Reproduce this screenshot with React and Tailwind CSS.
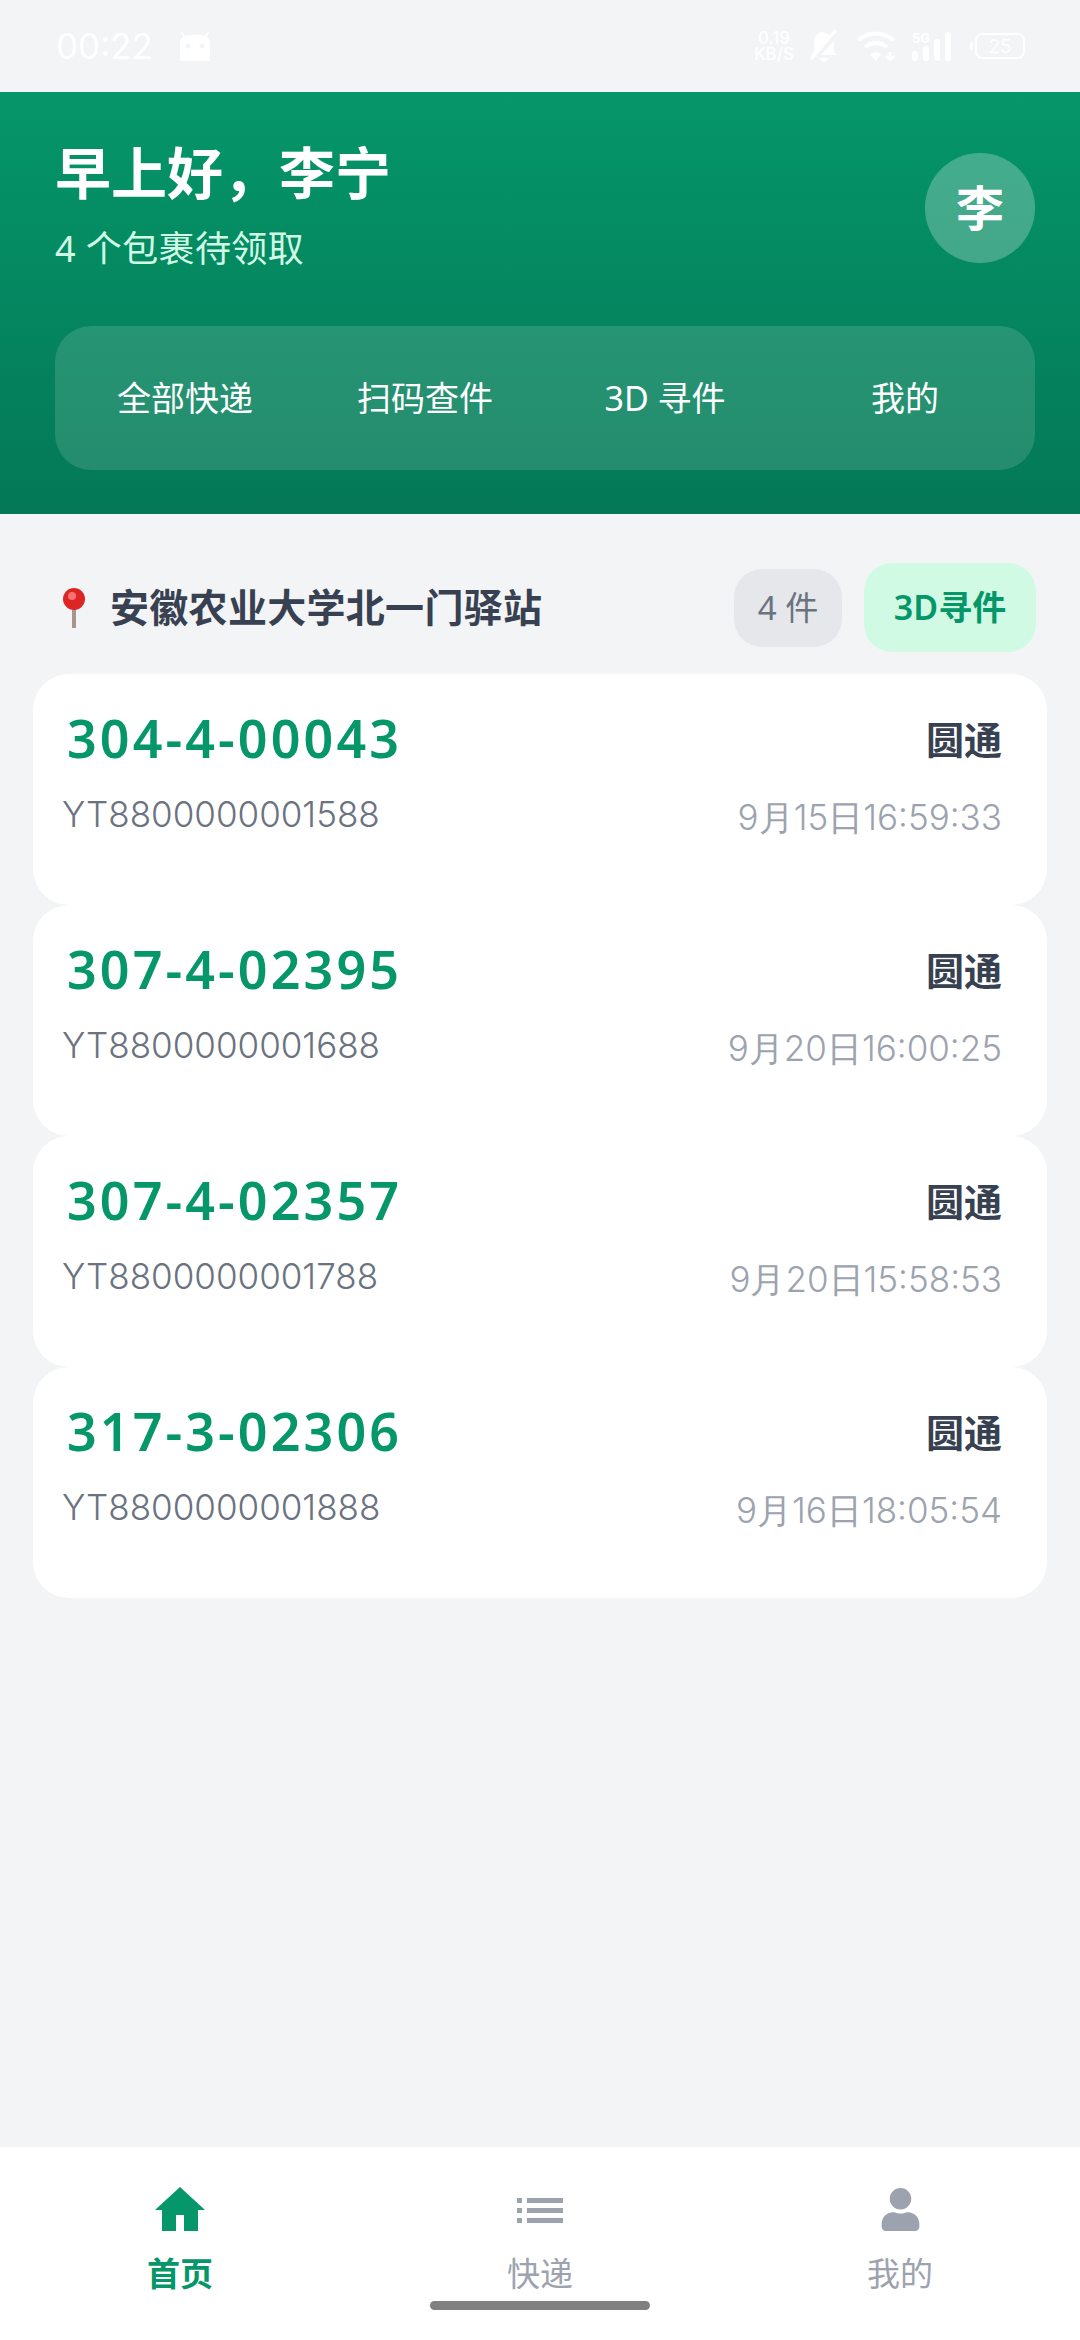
import { FaUser } from 'react-icons/fa'

const SANS = 'font-["Noto_Sans","Noto_Sans_CJK_SC",sans-serif]'

const parcels = [
    { code: '304-4-00043', no: 'YT8800000001588', time: '9月15日16:59:33' },
    { code: '307-4-02395', no: 'YT8800000001688', time: '9月20日16:00:25' },
    { code: '307-4-02357', no: 'YT8800000001788', time: '9月20日15:58:53' },
    { code: '317-3-02306', no: 'YT8800000001888', time: '9月16日18:05:54' },
]

function HomeIcon() {
    return (
        <svg width="50" height="44" viewBox="0 0 50 44" fill="currentColor">
            <path d="M25 0 50 23H43V44H29V28H21V44H7V23H0z" />
        </svg>
    )
}

function ListIcon() {
    return (
        <svg className="mb-[8px]" width="46" height="25" viewBox="0 0 46 25" fill="currentColor">
            <path d="M0 0h5v5H0zM10 0h36v5H10zM0 10h5v5H0zM10 10h36v5H10zM0 20h5v5H0zM10 20h36v5H10z" />
        </svg>
    )
}

function UserIcon() {
    return <FaUser size={43} />
}

function StatusBar() {
    return (
        <div className="h-[92px] flex items-center justify-between pl-[56px] pr-[55px] text-white">
            <div className="flex items-center gap-[26px]">
                <span className="text-[35px] leading-none font-['Inter',sans-serif]">00:22</span>
                <svg width="32" height="30" viewBox="0 0 32 30" fill="white">
                    <path d="M1 30V13Q1 8 4 6L2 1h1.500L6 5q10-3 20 0l2.500-4H30l-2 5q3 2 3 7v17z" />
                    <circle cx="9" cy="15" r="2.500" fill="#f3f4f6" />
                    <circle cx="23" cy="15" r="2.500" fill="#f3f4f6" />
                </svg>
            </div>
            <div className="flex items-center text-white font-['Inter',sans-serif]">
                <div className="flex flex-col items-center text-[17px] leading-[16px] font-medium">
                    <span>0.19</span>
                    <span>KB/S</span>
                </div>
                <svg className="ml-[16px]" width="28" height="34" viewBox="0 0 28 34" fill="white">
                    <path d="M12 3q-7 1-8 9v10L1 26h4L21 8q-3-4-9-5z" />
                    <path d="M24 12v10l3 4H11z" />
                    <path d="M1 30 26 1" stroke="white" strokeWidth="3" />
                    <path d="M10 29h8q-1 4-4 4t-4-4z" />
                </svg>
                <svg className="ml-[19px]" width="38" height="30" viewBox="0 0 38 30" fill="none" stroke="white" strokeWidth="4">
                    <path d="M1 9q17-13 36 0" />
                    <path d="M8 16q11-8 22 0" />
                    <path d="M13 23l6 7 5-7q-5-3-11 0z" fill="white" stroke="none" />
                    <path d="M33 21v7M29 25l4 4 4-4" strokeWidth="2.500" />
                </svg>
                <div className="relative ml-[17px] w-[39px] h-[29px] flex items-end justify-between">
                    <span className="absolute left-0 top-0 text-[13px] leading-none font-bold">5G</span>
                    <span className="w-[6px] h-[10px] bg-white rounded-full" />
                    <span className="w-[6px] h-[15px] bg-white rounded-full" />
                    <span className="w-[6px] h-[22px] bg-white rounded-full" />
                    <span className="w-[6px] h-[29px] bg-white rounded-full" />
                </div>
                <div className="ml-[19px] flex items-center gap-[2px]">
                    <span className="w-[3px] h-[8px] bg-white rounded-full" />
                    <div className="w-[50px] h-[26px] border-2 border-white rounded-[7px] flex items-center justify-center text-[19px] leading-none">
                        25
                    </div>
                </div>
            </div>
        </div>
    )
}

function Header() {
    return (
        <div className="h-[422px] bg-gradient-to-b from-[#059669] to-[#047857] pl-[55px] pr-[45px] pt-[44px]">
            <div className="flex items-start justify-between">
                <div>
                    <div className="text-[56px] leading-[72px] font-bold text-white">早上好，李宁</div>
                    <div className="text-[36px] leading-[50px] tracking-[0.4px] text-[#d1fae5] mt-[16px]">4 个包裹待领取</div>
                </div>
                <div className="w-[110px] h-[110px] mt-[17px] rounded-full bg-white/25 flex items-center justify-center text-[48px] font-bold text-white">
                    李
                </div>
            </div>
            <div className="mt-[52px] h-[144px] rounded-[36px] bg-white/[0.13] flex items-center px-[10px]">
                {['全部快递', '扫码查件', '3D 寻件', '我的'].map((label) => (
                    <div key={label} className="flex-1 text-center text-[34px] text-white">
                        {label}
                    </div>
                ))}
            </div>
        </div>
    )
}

function ParcelCard({ code, no, time }) {
    return (
        <div className="h-[231px] rounded-[36px] bg-white pl-[29px] pr-[45px] pt-[27px]">
            <div className="flex items-center justify-between">
                <span className="pl-[5px] text-[52px] leading-[72px] font-semibold tracking-[3.1px] text-[#059669]">{code}</span>
                <span className="text-[38px] leading-[72px] mt-[2px] font-semibold text-[#374151]">圆通</span>
            </div>
            <div className="flex justify-between mt-[15px]">
                <span className="text-[35px] leading-[48px] text-[#6b7280] font-['Inter',sans-serif] font-light">{no}</span>
                <span className="text-[35px] leading-[48px] mt-[3px] text-[#9ca3af] font-['Inter',sans-serif] font-light">{time}</span>
            </div>
        </div>
    )
}

function NavItem({ icon: Icon, label, active }) {
    return (
        <div className={`flex-1 flex flex-col items-center ${active ? 'text-[#059669]' : 'text-[#9ca3af]'}`}>
            <div className="h-[62px] flex items-end justify-center">
                <Icon />
            </div>
            <span className={`mt-[20px] text-[33px] leading-[46px] ${active ? 'font-bold' : ''}`}>{label}</span>
        </div>
    )
}

export default function App() {
    return (
        <div className={`relative w-[1080px] h-[2340px] bg-[#f3f4f6] flex flex-col overflow-hidden ${SANS}`}>
            <StatusBar />
            <Header />
            <main className="flex-1 px-[33px]">
                <div className="pt-[49px] pb-[22px] flex items-center justify-between pl-[30px] pr-[11px]">
                    <div className="flex items-center gap-[25px]">
                        <svg width="22" height="40" viewBox="0 0 22 40">
                            <rect x="9" y="18" width="4" height="22" fill="#a8968a" />
                            <circle cx="11" cy="11" r="11" fill="#dc2626" />
                            <circle cx="9" cy="8" r="4" fill="#f87171" />
                        </svg>
                        <span className="text-[39px] tracking-[0.3px] font-semibold text-[#374151]">安徽农业大学北一门驿站</span>
                    </div>
                    <div className="flex items-center gap-[22px]">
                        <span className="h-[78px] w-[108px] rounded-[28px] bg-[#e5e7eb] flex items-center justify-center text-[33px] text-[#6b7280]">4 件</span>
                        <span className="h-[89px] w-[172px] rounded-[28px] bg-[#d1fae5] flex items-center justify-center text-[34px] font-semibold text-[#059669]">3D寻件</span>
                    </div>
                </div>
                {parcels.map((p) => (
                    <ParcelCard key={p.code} {...p} />
                ))}
            </main>
            <nav className="h-[193px] bg-white flex pt-[22px]">
                <NavItem icon={HomeIcon} label="首页" active />
                <NavItem icon={ListIcon} label="快递" />
                <NavItem icon={UserIcon} label="我的" />
            </nav>
            <div className="absolute left-[430px] top-[2301px] w-[220px] h-[9px] rounded-full bg-[#808080]" />
        </div>
    )
}
